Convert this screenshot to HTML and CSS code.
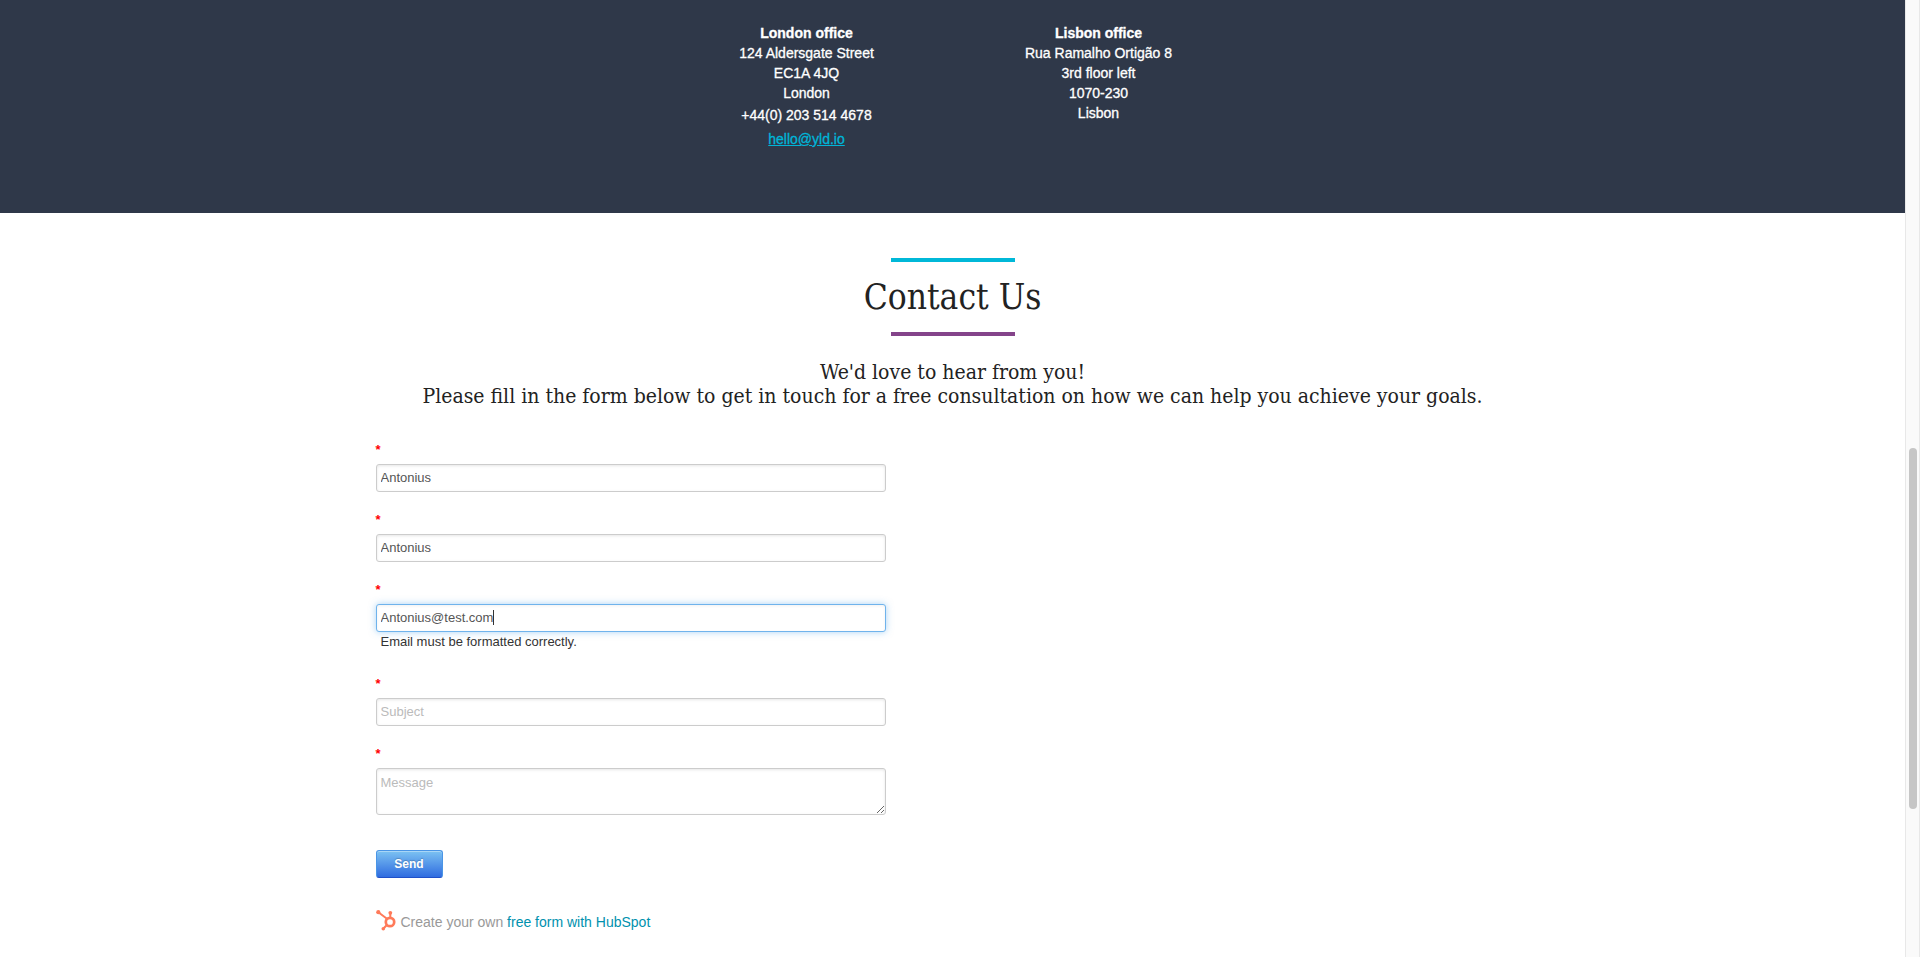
FILE: index.html
```html
<!DOCTYPE html>
<html lang="en">
<head>
<meta charset="utf-8">
<title>Contact Us</title>
<link rel="stylesheet" href="styles.css">
</head>
<body>
<div class="page">
  <header class="offices">
    <address class="office">
      <strong>London office</strong>
      <span>124 Aldersgate Street</span>
      <span>EC1A 4JQ</span>
      <span>London</span>
      <span class="phone">+44(0) 203 514 4678</span>
      <a class="mail" href="mailto:hello@yld.io">hello@yld.io</a>
    </address>
    <address class="office">
      <strong>Lisbon office</strong>
      <span>Rua Ramalho Ortigão 8</span>
      <span>3rd floor left</span>
      <span>1070-230</span>
      <span>Lisbon</span>
    </address>
  </header>
  <main class="contact">
    <h1 class="title">Contact Us</h1>
    <p class="intro">We'd love to hear from you!<br>Please fill in the form below to get in touch for a free consultation on how we can help you achieve your goals.</p>
    <form class="form">
      <div class="field">
        <label class="required" for="firstname">*</label>
        <input class="control" id="firstname" type="text" value="Antonius">
      </div>
      <div class="field">
        <label class="required" for="lastname">*</label>
        <input class="control" id="lastname" type="text" value="Antonius">
      </div>
      <div class="field">
        <label class="required" for="email">*</label>
        <div class="active">
          <input class="control focused" id="email" type="text" value="Antonius@test.com">
          <i class="caret"></i>
        </div>
        <p class="error">Email must be formatted correctly.</p>
      </div>
      <div class="field">
        <label class="required" for="subject">*</label>
        <input class="control" id="subject" type="text" placeholder="Subject">
      </div>
      <div class="field">
        <label class="required" for="message">*</label>
        <textarea class="control message" id="message" placeholder="Message"></textarea>
      </div>
      <button class="send" type="submit">Send</button>
    </form>
    <p class="credit">
      <svg class="sprocket" viewBox="0 0 20 21" width="20" height="21" fill="none" stroke="#ff7a59" aria-hidden="true">
        <path d="M2.3 2.2 11 8.8M14.3 3.2V7.5M10.8 15 7.5 18.5" stroke-width="2"/>
        <circle cx="14" cy="12" r="4.2" stroke-width="2.7"/>
        <g fill="#ff7a59" stroke="none"><circle cx="2.3" cy="2.2" r="2.1"/><circle cx="14.3" cy="2.8" r="1.9"/><circle cx="7.3" cy="18.8" r="1.8"/></g>
      </svg>
      <span>Create your own <a href="#">free form with HubSpot</a></span>
    </p>
  </main>
</div>
<div class="scrollbar"><div class="thumb"></div></div>
</body>
</html>
```
FILE: styles.css
```css
* { box-sizing: border-box; }
body {
  display: grid;
  grid-template-columns: 1fr 15px;
  height: 100vh;
  margin: 0;
  overflow: hidden;
  background: #fff;
  font-family: "Liberation Sans", Arial, sans-serif;
}
.page { min-width: 0; }
.offices {
  display: flex;
  justify-content: center;
  padding: 23px 0 61px;
  background: #2f3849;
  color: #fff;
}
.office {
  display: flex;
  flex-direction: column;
  align-items: center;
  width: 292px;
  font-size: 14px;
  font-style: normal;
  line-height: 20px;
  -webkit-text-stroke: 0.3px currentColor;
}
.phone { line-height: 24px; }
.mail { line-height: 25px; color: #00b5d8; }
.contact {
  max-width: 1170px;
  margin: 0 auto;
  padding: 45px 8px 0;
}
.title, .intro {
  font-family: "Roboto Slab", "DejaVu Serif Condensed", "DejaVu Serif", serif;
  color: #222;
  text-align: center;
}
.title {
  display: flex;
  flex-direction: column;
  align-items: center;
  margin: 0;
  font-size: 35px;
  font-weight: 400;
  line-height: 70px;
}
.title::before, .title::after {
  content: "";
  width: 124px;
  height: 4px;
  background: #00b8d8;
}
.title::after { background: #84448a; }
.intro {
  margin: 24px 0 0;
  font-size: 21px;
  font-weight: 300;
  line-height: 24px;
}
.form { max-width: 510px; margin-top: 32px; }
.field { display: flex; flex-direction: column; margin-bottom: 18px; }
.required {
  height: 24px;
  color: #f00;
  font-size: 13px;
  font-weight: 700;
  line-height: 20px;
}
.control {
  display: block;
  width: 100%;
  height: 28px;
  padding: 3px 4px 5px;
  border: 1px solid #ccc;
  border-radius: 3px;
  outline: 0;
  background: #fff;
  box-shadow: inset 0 1px 3px rgba(0, 0, 0, 0.1);
  color: #555;
  font: 13px/18px "Liberation Sans", Arial, sans-serif;
}
.control::placeholder { color: #bbb; }
.focused {
  border-color: #6fb3ec;
  box-shadow: inset 0 1px 3px rgba(0, 0, 0, 0.06), 0 0 7px rgba(82, 168, 236, 0.5);
}
.active { position: relative; }
.caret {
  position: absolute;
  top: 6px;
  left: 117px;
  width: 1px;
  height: 15px;
  background: #333;
}
.error {
  margin: 1px 0 5px 5px;
  color: #333;
  font-size: 13px;
  line-height: 18px;
}
.message { height: 47px; padding-top: 5px; resize: vertical; }
.send {
  display: block;
  width: 67px;
  height: 28px;
  margin-top: 35px;
  padding: 0;
  border: 1px solid #4a95e6;
  border-bottom-color: #1f50c8;
  border-radius: 3px;
  background: linear-gradient(#7cc2f2, #2f6ce0);
  box-shadow: inset 0 1px 0 rgba(255, 255, 255, 0.35);
  color: #fff;
  font: bold 12px/18px "Liberation Sans", Arial, sans-serif;
  text-shadow: 0 -1px 1px rgba(0, 0, 0, 0.2);
}
.credit {
  display: flex;
  align-items: flex-start;
  gap: 5px;
  margin: 32px 0 0;
  color: #999;
  font-size: 14px;
  line-height: 24px;
}
.credit a { color: #0091ae; text-decoration: none; }
.scrollbar {
  display: flex;
  justify-content: center;
  padding-top: 448px;
  border: solid #e8e8e8;
  border-width: 0 1px;
  background: #fafafa;
}
.thumb {
  width: 8px;
  height: 361px;
  border-radius: 4px;
  background: #c6c6c6;
}
```
